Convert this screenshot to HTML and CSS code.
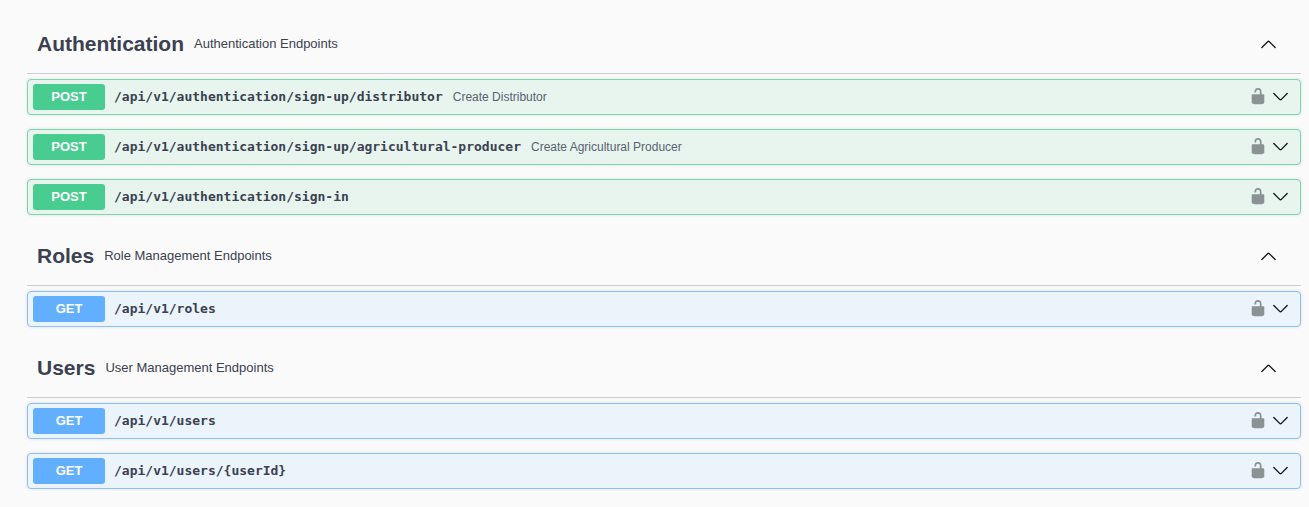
FILE: index.html
```html
<!DOCTYPE html>
<html lang="en">
<head>
<meta charset="utf-8">
<meta name="viewport" content="width=device-width, initial-scale=1">
<title>API endpoints</title>
<link rel="stylesheet" href="styles.css">
</head>
<body>
<svg class="sprite" aria-hidden="true">
  <symbol id="arrow-up" viewBox="0 0 16 16"><path d="M.9 11.200 7.100 5Q8 4.100 8.900 5L15.100 11.200" fill="none" stroke="currentColor" stroke-width="1.400" stroke-linecap="round"/></symbol>
  <symbol id="arrow-down" viewBox="0 0 16 16"><path d="M.9 3.800 7.100 10Q8 10.900 8.900 10L15.100 3.800" fill="none" stroke="currentColor" stroke-width="1.500" stroke-linecap="round"/></symbol>
  <symbol id="unlocked" viewBox="0 0 20 20"><path d="M15.800 7H14V4.600C14 1.700 12.665 0 10 0 7.334 0 6 1.700 6 4.600V5h2v-.801C8 2.754 8.797 2 10 2c1.203 0 2 .754 2 2.199V7H4c-.553 0-1 .646-1 1.199V16c0 .549.428 1.139.951 1.307l1.197.387C5.672 17.861 6.550 18 7.100 18h5.800c.549 0 1.428-.139 1.951-.307l1.196-.387c.524-.167.953-.757.953-1.306V8.199C17 7.646 16.352 7 15.800 7z" fill="currentColor"/></symbol>
</svg>
<main class="api">
  <section class="tag">
    <header class="tag-header">
      <h2 class="tag-name">Authentication</h2>
      <p class="tag-description">Authentication Endpoints</p>
      <button class="icon-button" type="button" aria-label="Collapse Authentication"><svg class="arrow"><use href="#arrow-up"/></svg></button>
    </header>
    <div class="operations">
      <div class="operation post">
        <span class="method">POST</span><span class="path">/api/v1/authentication/sign-up/distributor</span><span class="summary">Create Distributor</span>
        <button class="icon-button lock-button" type="button" aria-label="Authorize"><svg class="lock"><use href="#unlocked"/></svg></button>
        <button class="icon-button" type="button" aria-label="Expand operation"><svg class="arrow"><use href="#arrow-down"/></svg></button>
      </div>
      <div class="operation post">
        <span class="method">POST</span><span class="path">/api/v1/authentication/sign-up/agricultural-producer</span><span class="summary">Create Agricultural Producer</span>
        <button class="icon-button lock-button" type="button" aria-label="Authorize"><svg class="lock"><use href="#unlocked"/></svg></button>
        <button class="icon-button" type="button" aria-label="Expand operation"><svg class="arrow"><use href="#arrow-down"/></svg></button>
      </div>
      <div class="operation post">
        <span class="method">POST</span><span class="path">/api/v1/authentication/sign-in</span>
        <button class="icon-button lock-button" type="button" aria-label="Authorize"><svg class="lock"><use href="#unlocked"/></svg></button>
        <button class="icon-button" type="button" aria-label="Expand operation"><svg class="arrow"><use href="#arrow-down"/></svg></button>
      </div>
    </div>
  </section>
  <section class="tag">
    <header class="tag-header">
      <h2 class="tag-name">Roles</h2>
      <p class="tag-description">Role Management Endpoints</p>
      <button class="icon-button" type="button" aria-label="Collapse Roles"><svg class="arrow"><use href="#arrow-up"/></svg></button>
    </header>
    <div class="operations">
      <div class="operation get">
        <span class="method">GET</span><span class="path">/api/v1/roles</span>
        <button class="icon-button lock-button" type="button" aria-label="Authorize"><svg class="lock"><use href="#unlocked"/></svg></button>
        <button class="icon-button" type="button" aria-label="Expand operation"><svg class="arrow"><use href="#arrow-down"/></svg></button>
      </div>
    </div>
  </section>
  <section class="tag">
    <header class="tag-header">
      <h2 class="tag-name">Users</h2>
      <p class="tag-description">User Management Endpoints</p>
      <button class="icon-button" type="button" aria-label="Collapse Users"><svg class="arrow"><use href="#arrow-up"/></svg></button>
    </header>
    <div class="operations">
      <div class="operation get">
        <span class="method">GET</span><span class="path">/api/v1/users</span>
        <button class="icon-button lock-button" type="button" aria-label="Authorize"><svg class="lock"><use href="#unlocked"/></svg></button>
        <button class="icon-button" type="button" aria-label="Expand operation"><svg class="arrow"><use href="#arrow-down"/></svg></button>
      </div>
      <div class="operation get">
        <span class="method">GET</span><span class="path">/api/v1/users/{userId}</span>
        <button class="icon-button lock-button" type="button" aria-label="Authorize"><svg class="lock"><use href="#unlocked"/></svg></button>
        <button class="icon-button" type="button" aria-label="Expand operation"><svg class="arrow"><use href="#arrow-down"/></svg></button>
      </div>
    </div>
  </section>
</main>
</body>
</html>
```

FILE: styles.css
```css
* {
  box-sizing: border-box;
}

body {
  margin: 0;
  background: #fafafa;
  color: #3b4151;
  font-family: "Liberation Sans", Arial, sans-serif;
}

.sprite {
  display: none;
}

.api {
  display: flex;
  flex-direction: column;
  gap: 12px;
  padding: 15px 8px 16px 27px;
}

.tag {
  display: flex;
  flex-direction: column;
  gap: 5px;
}

.tag-header {
  display: flex;
  align-items: center;
  gap: 10px;
  min-height: 59px;
  padding: 0 25px 0 10px;
  border-bottom: 1px solid #cdced2;
}

.tag-name {
  margin: 0;
  font-size: 21px;
  line-height: 28px;
}

.tag-description {
  flex: 1;
  margin: 0;
  font-size: 13px;
  line-height: 20px;
}

.operations {
  display: flex;
  flex-direction: column;
  gap: 14px;
}

.operation {
  display: flex;
  align-items: center;
  min-height: 36px;
  padding: 4px 12px 4px 5px;
  border: 1px solid;
  border-radius: 4px;
  box-shadow: 0 0 3px rgba(0, 0, 0, 0.12);
}

.post {
  border-color: #7bd8ad;
  background: #e7f5ee;
}

.get {
  border-color: #8bc1f8;
  background: #ebf3fb;
}

.method {
  width: 72px;
  border-radius: 3px;
  color: #fff;
  font-size: 13px;
  font-weight: 700;
  line-height: 26px;
  text-align: center;
}

.post .method {
  background: #49cc90;
}

.get .method {
  background: #61affe;
}

.path {
  padding: 0 10px 0 9px;
  font-family: "DejaVu Sans Mono", monospace;
  font-size: 13px;
  font-weight: 700;
  line-height: 20px;
}

.summary {
  color: #596270;
  font-size: 12px;
  line-height: 20px;
}

.icon-button {
  display: flex;
  padding: 0;
  border: 0;
  background: none;
  color: #16181c;
  cursor: pointer;
}

.lock-button {
  margin: 0 6px 0 auto;
  color: #8b9293;
}

.arrow {
  width: 15px;
  height: 15px;
}

.lock {
  width: 18px;
  height: 18px;
}
```
